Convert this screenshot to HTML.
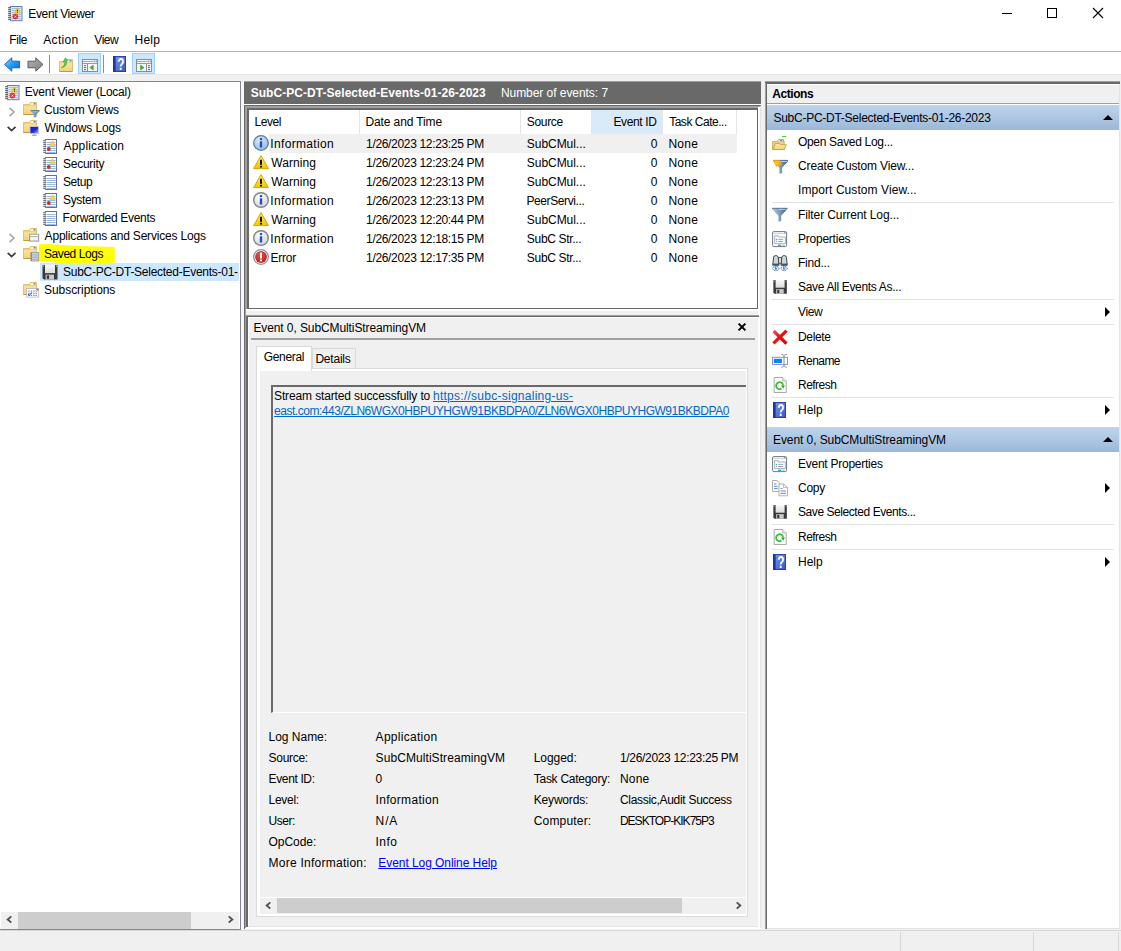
<!DOCTYPE html>
<html lang="en"><head><meta charset="utf-8"><title>Event Viewer</title>
<style>
html,body{margin:0;padding:0;}
body{width:1121px;height:951px;overflow:hidden;background:#f0f0f0;position:relative;font-family:"Liberation Sans",sans-serif;font-size:12px;color:#000;}
#w{position:absolute;left:0;top:0;width:1121px;height:951px;overflow:hidden;}
#w div,#w svg.ic,#w .t{position:absolute;}
.ic svg{display:block;}
.t{white-space:nowrap;line-height:14px;height:14px;}
</style></head><body><div id="w">
<div style="left:0px;top:0px;width:1121px;height:74px;background:#fff;"></div>
<div style="left:0px;top:51px;width:1121px;height:1px;background:#b5b5b5;"></div>
<div style="left:0px;top:74px;width:1121px;height:1px;background:#e6e6e6;"></div>
<div class="ic" style="left:7.7px;top:6px"><svg width="15" height="16" viewBox="0 0 15 16"><rect x="2.5" y="0.5" width="11.5" height="14.2" fill="#dde8f6" stroke="#6a7cba"/><rect x="0.4" y="1" width="2.4" height="13.4" fill="#bdbdbd"/><path d="M3.5 2.5H13.5" stroke="#a9c1e2" stroke-width="1"/><path d="M3.5 4.5H13.5" stroke="#a9c1e2" stroke-width="1"/><path d="M3.5 6.5H13.5" stroke="#a9c1e2" stroke-width="1"/><path d="M3.5 8.5H13.5" stroke="#a9c1e2" stroke-width="1"/><path d="M3.5 10.5H13.5" stroke="#a9c1e2" stroke-width="1"/><path d="M3.5 12.5H13.5" stroke="#a9c1e2" stroke-width="1"/><path d="M0.2 1.5h2.8" stroke="#5f5f5f" stroke-width="0.9"/><path d="M0.2 3.5h2.8" stroke="#5f5f5f" stroke-width="0.9"/><path d="M0.2 5.5h2.8" stroke="#5f5f5f" stroke-width="0.9"/><path d="M0.2 7.5h2.8" stroke="#5f5f5f" stroke-width="0.9"/><path d="M0.2 9.5h2.8" stroke="#5f5f5f" stroke-width="0.9"/><path d="M0.2 11.5h2.8" stroke="#5f5f5f" stroke-width="0.9"/><path d="M0.2 13.5h2.8" stroke="#5f5f5f" stroke-width="0.9"/><path d="M9.4 1.8L12.4 7.2H6.4Z" fill="#ffd51e" stroke="#d8ac00" stroke-width="0.5"/><rect x="8.9" y="3.6" width="1" height="1.9" fill="#333"/><rect x="8.9" y="5.9" width="1" height="0.8" fill="#333"/><circle cx="7.4" cy="10.6" r="2.6" fill="#d83a3a" stroke="#b82020" stroke-width="0.4"/><path d="M6.5 9.7l1.8 1.8M8.3 9.7l-1.8 1.8" stroke="#fff" stroke-width="0.8"/></svg></div>
<span class="t" style="left:28.32px;top:7px;letter-spacing:-0.367px;">Event Viewer</span>
<svg class="ic" style="left:996px;top:0" width="125" height="30" viewBox="0 0 125 30"><path d="M6 13.5h10" stroke="#000" stroke-width="1" fill="none"/><rect x="51.5" y="8.5" width="9" height="9" stroke="#000" fill="none"/><path d="M97 8l10 10M107 8l-10 10" stroke="#000" stroke-width="1.1" fill="none"/></svg>
<span class="t" style="left:9.22px;top:33px;letter-spacing:-0.379px;">File</span>
<span class="t" style="left:43.28px;top:33px;letter-spacing:0.326px;">Action</span>
<span class="t" style="left:94.35px;top:33px;letter-spacing:-0.475px;">View</span>
<span class="t" style="left:134.52px;top:33px;letter-spacing:0.202px;">Help</span>
<div class="ic" style="left:4px;top:57px"><svg width="17" height="15" viewBox="0 0 17 15"><defs><linearGradient id="g1" x1="0" y1="0" x2="1" y2="1"><stop offset="0" stop-color="#9adcff"/><stop offset="0.5" stop-color="#1e9bf0"/><stop offset="1" stop-color="#0868d0"/></linearGradient></defs><path d="M0.6 7.5L7.8 0.8V4.2H15.6V10.8H7.8V14.2Z" fill="url(#g1)" stroke="#1c66b4" stroke-width="1" stroke-linejoin="round"/></svg></div>
<div class="ic" style="left:27px;top:57px"><svg width="17" height="15" viewBox="0 0 17 15"><defs><linearGradient id="g2" x1="0" y1="0" x2="1" y2="1"><stop offset="0" stop-color="#b4b4b4"/><stop offset="1" stop-color="#7e7e7e"/></linearGradient></defs><path d="M16 7.5L8.8 0.8V4.2H1V10.8H8.8V14.2Z" fill="url(#g2)" stroke="#5c5c5c" stroke-width="1" stroke-linejoin="round"/></svg></div>
<div style="left:49px;top:55px;width:1px;height:18px;background:#8d8d8d;"></div>
<div class="ic" style="left:59px;top:57px"><svg width="15" height="15" viewBox="0 0 15 15"><defs><linearGradient id="g3" x1="0" y1="0" x2="0" y2="1"><stop offset="0" stop-color="#fdeaa8"/><stop offset="1" stop-color="#f1d27c"/></linearGradient></defs><path d="M0.5 4.5H6.5L7.5 2.5H13.5V14.5H0.5Z" fill="url(#g3)" stroke="#d9b45c" stroke-width="0.8"/><rect x="8.5" y="3" width="4" height="1.6" fill="#fff"/><rect x="10.5" y="3" width="2" height="1.6" fill="#4a8de8"/><path d="M0.5 14.5H13.5" stroke="#c09a3c" stroke-width="1"/><path d="M1 5.6H13" stroke="#e6c878" stroke-width="0.7"/><path d="M2.6 10.6C5.4 9.4 6 6.6 5.8 4.6L4 5L6.4 0.8L9.2 3.6L7.6 4C8 7.4 6.4 10.2 2.6 10.6Z" fill="#4ed04e" stroke="#2a9a2a" stroke-width="0.5"/></svg></div>
<div style="left:78px;top:53px;width:23px;height:21px;background:#cce8ff;border:1px solid #99d1ff;box-sizing:border-box;"></div>
<div class="ic" style="left:82px;top:59px"><svg width="16" height="13" viewBox="0 0 16 13"><rect x="0.5" y="0.5" width="15" height="12" fill="#f6f6f6" stroke="#8c8c8c"/><path d="M1 2.5H11" stroke="#a8a8a8"/><path d="M1 4.5H15" stroke="#9a9a9a"/><rect x="11.7" y="1.6" width="1.2" height="1.6" fill="#8c8c8c"/><rect x="13.6" y="1.6" width="1.2" height="1.6" fill="#8c8c8c"/><path d="M5.5 5V12" stroke="#8c8c8c"/><rect x="2" y="6" width="2" height="1.2" rx="0.5" fill="#3b7bd0"/><rect x="2" y="8" width="2" height="1.2" rx="0.5" fill="#3b7bd0"/><rect x="2" y="10" width="2" height="1.2" rx="0.5" fill="#3b7bd0"/><path d="M11.2 6.2V11L7.8 8.6Z" fill="#3fb53f" stroke="#2a9a2a" stroke-width="0.6"/></svg></div>
<div style="left:103px;top:55px;width:1px;height:18px;background:#8d8d8d;"></div>
<div class="ic" style="left:113px;top:56px"><svg width="13" height="16" viewBox="0 0 13 16"><defs><linearGradient id="g12" x1="0" y1="0" x2="1" y2="1"><stop offset="0" stop-color="#7a9aec"/><stop offset="1" stop-color="#3a55c0"/></linearGradient></defs><rect x="0" y="0" width="13" height="16" fill="url(#g12)"/><rect x="0" y="0" width="2.6" height="16" fill="#1b3796"/><rect x="0.4" y="0.4" width="12.2" height="15.2" fill="none" stroke="#1f3aa0" stroke-width="0.8"/><text transform="translate(7.8,13.8) scale(0.74,1)" font-family="Liberation Sans,sans-serif" font-weight="bold" font-size="16" fill="#fff" text-anchor="middle">?</text></svg></div>
<div style="left:132px;top:53px;width:23px;height:21px;background:#cce8ff;border:1px solid #99d1ff;box-sizing:border-box;"></div>
<div class="ic" style="left:136px;top:59px"><svg width="16" height="13" viewBox="0 0 16 13"><rect x="0.5" y="0.5" width="15" height="12" fill="#f6f6f6" stroke="#8c8c8c"/><path d="M1 2.5H11" stroke="#a8a8a8"/><path d="M1 4.5H15" stroke="#9a9a9a"/><rect x="11.7" y="1.6" width="1.2" height="1.6" fill="#8c8c8c"/><rect x="13.6" y="1.6" width="1.2" height="1.6" fill="#8c8c8c"/><path d="M10.5 5V12" stroke="#8c8c8c"/><rect x="12" y="6" width="2" height="1.2" rx="0.5" fill="#3b7bd0"/><rect x="12" y="8" width="2" height="1.2" rx="0.5" fill="#3b7bd0"/><rect x="12" y="10" width="2" height="1.2" rx="0.5" fill="#3b7bd0"/><path d="M4.6 6.2V11L8 8.6Z" fill="#3fb53f" stroke="#2a9a2a" stroke-width="0.6"/></svg></div>
<div style="left:0px;top:81px;width:241px;height:849px;background:#fff;border:1px solid #828790;border-left:none;box-sizing:border-box;"></div>
<div style="left:244px;top:81px;width:517px;height:1px;background:#a0a0a0;"></div>
<div style="left:765px;top:81px;width:355px;height:1px;background:#a0a0a0;"></div>
<div style="left:241px;top:82px;width:3px;height:848px;background:#f7f7f7;"></div>
<div class="ic" style="left:5px;top:85px"><svg width="15" height="16" viewBox="0 0 15 16"><rect x="2.5" y="0.5" width="11.5" height="14.2" fill="#dde8f6" stroke="#6a7cba"/><rect x="0.4" y="1" width="2.4" height="13.4" fill="#bdbdbd"/><path d="M3.5 2.5H13.5" stroke="#a9c1e2" stroke-width="1"/><path d="M3.5 4.5H13.5" stroke="#a9c1e2" stroke-width="1"/><path d="M3.5 6.5H13.5" stroke="#a9c1e2" stroke-width="1"/><path d="M3.5 8.5H13.5" stroke="#a9c1e2" stroke-width="1"/><path d="M3.5 10.5H13.5" stroke="#a9c1e2" stroke-width="1"/><path d="M3.5 12.5H13.5" stroke="#a9c1e2" stroke-width="1"/><path d="M0.2 1.5h2.8" stroke="#5f5f5f" stroke-width="0.9"/><path d="M0.2 3.5h2.8" stroke="#5f5f5f" stroke-width="0.9"/><path d="M0.2 5.5h2.8" stroke="#5f5f5f" stroke-width="0.9"/><path d="M0.2 7.5h2.8" stroke="#5f5f5f" stroke-width="0.9"/><path d="M0.2 9.5h2.8" stroke="#5f5f5f" stroke-width="0.9"/><path d="M0.2 11.5h2.8" stroke="#5f5f5f" stroke-width="0.9"/><path d="M0.2 13.5h2.8" stroke="#5f5f5f" stroke-width="0.9"/><path d="M9.4 1.8L12.4 7.2H6.4Z" fill="#ffd51e" stroke="#d8ac00" stroke-width="0.5"/><rect x="8.9" y="3.6" width="1" height="1.9" fill="#333"/><rect x="8.9" y="5.9" width="1" height="0.8" fill="#333"/><circle cx="7.4" cy="10.6" r="2.6" fill="#d83a3a" stroke="#b82020" stroke-width="0.4"/><path d="M6.5 9.7l1.8 1.8M8.3 9.7l-1.8 1.8" stroke="#fff" stroke-width="0.8"/></svg></div>
<span class="t" style="left:24.72px;top:85px;letter-spacing:-0.222px;">Event Viewer (Local)</span>
<svg class="ic" style="left:8px;top:107px" width="8" height="10" viewBox="0 0 8 10"><path d="M1.5 0.8L6 5L1.5 9.2" stroke="#a6a6a6" stroke-width="1.6" fill="none"/></svg>
<div class="ic" style="left:23px;top:102px"><svg width="17" height="17" viewBox="0 0 17 17"><defs><linearGradient id="g5" x1="0" y1="0" x2="0" y2="1"><stop offset="0" stop-color="#fdeaa8"/><stop offset="1" stop-color="#f1d27c"/></linearGradient><linearGradient id="g6" x1="0" y1="0" x2="1" y2="0"><stop offset="0" stop-color="#b6cfe2"/><stop offset="0.5" stop-color="#7d9db8"/><stop offset="1" stop-color="#3c5a76"/></linearGradient></defs><path d="M0.5 2.5H6.5L7.5 0.5H13.5V12.5H0.5Z" fill="url(#g5)" stroke="#d9b45c" stroke-width="0.8"/><rect x="8.5" y="1" width="4" height="1.6" fill="#fff"/><rect x="10.5" y="1" width="2" height="1.6" fill="#4a8de8"/><path d="M0.5 12.5H13.5" stroke="#c09a3c" stroke-width="1"/><path d="M1 3.6H13" stroke="#e6c878" stroke-width="0.7"/><path d="M7.5 8.3H16.3V9.5L13.4 12.332V14.9L10.700000000000001 15.5V12.332L7.5 9.5Z" fill="url(#g6)"/><path d="M7.5 8.700000000000001H16.3" stroke="#56748f" stroke-width="0.9"/><path d="M11.46 9.8H15.5" stroke="#e8f0f6" stroke-width="0.7"/></svg></div>
<span class="t" style="left:43.99px;top:103px;letter-spacing:-0.134px;">Custom Views</span>
<svg class="ic" style="left:7px;top:126px" width="10" height="7" viewBox="0 0 10 7"><path d="M0.7 0.8L4.6 4.6L8.5 0.8" stroke="#3a3a3a" stroke-width="1.7" fill="none"/></svg>
<div class="ic" style="left:23px;top:120px"><svg width="17" height="17" viewBox="0 0 17 17"><defs><linearGradient id="g7" x1="0" y1="0" x2="0" y2="1"><stop offset="0" stop-color="#fdeaa8"/><stop offset="1" stop-color="#f1d27c"/></linearGradient><linearGradient id="g8" x1="0" y1="0" x2="1" y2="1"><stop offset="0" stop-color="#0a16c8"/><stop offset="0.55" stop-color="#1a2fd8"/><stop offset="1" stop-color="#b8c8ff"/></linearGradient></defs><path d="M0.5 2.5H6.5L7.5 0.5H13.5V12.5H0.5Z" fill="url(#g7)" stroke="#d9b45c" stroke-width="0.8"/><rect x="8.5" y="1" width="4" height="1.6" fill="#fff"/><rect x="10.5" y="1" width="2" height="1.6" fill="#4a8de8"/><path d="M0.5 12.5H13.5" stroke="#c09a3c" stroke-width="1"/><path d="M1 3.6H13" stroke="#e6c878" stroke-width="0.7"/><rect x="7" y="6.5" width="8.6" height="7" fill="url(#g8)" stroke="#c8c8c8" stroke-width="0.9"/><path d="M9 15.3h4.6" stroke="#8a8a8a" stroke-width="0.9"/><path d="M10.3 14.2h2" stroke="#aaa" stroke-width="1"/></svg></div>
<span class="t" style="left:44.55px;top:121px;letter-spacing:-0.147px;">Windows Logs</span>
<div class="ic" style="left:43px;top:139px"><svg width="14" height="15" viewBox="0 0 14 15"><rect x="2.5" y="0.5" width="11" height="14" fill="#fff" stroke="#5f6fae"/><rect x="0.4" y="0.8" width="2.4" height="13.4" fill="#cfcfcf"/><path d="M3.5 3.5H12.5" stroke="#9ab8dc" stroke-width="1"/><path d="M3.5 5.5H12.5" stroke="#9ab8dc" stroke-width="1"/><path d="M3.5 7.5H12.5" stroke="#9ab8dc" stroke-width="1"/><path d="M3.5 9.5H12.5" stroke="#9ab8dc" stroke-width="1"/><path d="M3.5 11.5H12.5" stroke="#9ab8dc" stroke-width="1"/><path d="M3.5 13.5H12.5" stroke="#9ab8dc" stroke-width="1"/><path d="M0.3 1.5h2.6" stroke="#6a6a6a" stroke-width="0.9"/><path d="M0.3 3.5h2.6" stroke="#6a6a6a" stroke-width="0.9"/><path d="M0.3 5.5h2.6" stroke="#6a6a6a" stroke-width="0.9"/><path d="M0.3 7.5h2.6" stroke="#6a6a6a" stroke-width="0.9"/><path d="M0.3 9.5h2.6" stroke="#6a6a6a" stroke-width="0.9"/><path d="M0.3 11.5h2.6" stroke="#6a6a6a" stroke-width="0.9"/><path d="M0.3 13.5h2.6" stroke="#6a6a6a" stroke-width="0.9"/><path d="M9.5 1.8L12.3 6.4H6.7Z" fill="#ffd83a" stroke="#e0b000" stroke-width="0.5"/><circle cx="5.8" cy="10" r="1.9" fill="#d42a2a"/></svg></div>
<span class="t" style="left:63.58px;top:139px;letter-spacing:0.161px;">Application</span>
<div class="ic" style="left:43px;top:157px"><svg width="14" height="15" viewBox="0 0 14 15"><rect x="2.5" y="0.5" width="11" height="14" fill="#fff" stroke="#5f6fae"/><rect x="0.4" y="0.8" width="2.4" height="13.4" fill="#cfcfcf"/><path d="M3.5 3.5H12.5" stroke="#9ab8dc" stroke-width="1"/><path d="M3.5 5.5H12.5" stroke="#9ab8dc" stroke-width="1"/><path d="M3.5 7.5H12.5" stroke="#9ab8dc" stroke-width="1"/><path d="M3.5 9.5H12.5" stroke="#9ab8dc" stroke-width="1"/><path d="M3.5 11.5H12.5" stroke="#9ab8dc" stroke-width="1"/><path d="M3.5 13.5H12.5" stroke="#9ab8dc" stroke-width="1"/><path d="M0.3 1.5h2.6" stroke="#6a6a6a" stroke-width="0.9"/><path d="M0.3 3.5h2.6" stroke="#6a6a6a" stroke-width="0.9"/><path d="M0.3 5.5h2.6" stroke="#6a6a6a" stroke-width="0.9"/><path d="M0.3 7.5h2.6" stroke="#6a6a6a" stroke-width="0.9"/><path d="M0.3 9.5h2.6" stroke="#6a6a6a" stroke-width="0.9"/><path d="M0.3 11.5h2.6" stroke="#6a6a6a" stroke-width="0.9"/><path d="M0.3 13.5h2.6" stroke="#6a6a6a" stroke-width="0.9"/><path d="M9.5 1.8L12.3 6.4H6.7Z" fill="#ffd83a" stroke="#e0b000" stroke-width="0.5"/><circle cx="5.8" cy="10" r="1.9" fill="#d42a2a"/></svg></div>
<span class="t" style="left:63.06px;top:157px;letter-spacing:-0.262px;">Security</span>
<div class="ic" style="left:43px;top:175px"><svg width="14" height="15" viewBox="0 0 14 15"><rect x="2.5" y="0.5" width="11" height="14" fill="#fff" stroke="#5f6fae"/><rect x="0.4" y="0.8" width="2.4" height="13.4" fill="#cfcfcf"/><path d="M3.5 3.5H12.5" stroke="#9ab8dc" stroke-width="1"/><path d="M3.5 5.5H12.5" stroke="#9ab8dc" stroke-width="1"/><path d="M3.5 7.5H12.5" stroke="#9ab8dc" stroke-width="1"/><path d="M3.5 9.5H12.5" stroke="#9ab8dc" stroke-width="1"/><path d="M3.5 11.5H12.5" stroke="#9ab8dc" stroke-width="1"/><path d="M3.5 13.5H12.5" stroke="#9ab8dc" stroke-width="1"/><path d="M0.3 1.5h2.6" stroke="#6a6a6a" stroke-width="0.9"/><path d="M0.3 3.5h2.6" stroke="#6a6a6a" stroke-width="0.9"/><path d="M0.3 5.5h2.6" stroke="#6a6a6a" stroke-width="0.9"/><path d="M0.3 7.5h2.6" stroke="#6a6a6a" stroke-width="0.9"/><path d="M0.3 9.5h2.6" stroke="#6a6a6a" stroke-width="0.9"/><path d="M0.3 11.5h2.6" stroke="#6a6a6a" stroke-width="0.9"/><path d="M0.3 13.5h2.6" stroke="#6a6a6a" stroke-width="0.9"/></svg></div>
<span class="t" style="left:63.06px;top:175px;letter-spacing:-0.450px;">Setup</span>
<div class="ic" style="left:43px;top:193px"><svg width="14" height="15" viewBox="0 0 14 15"><rect x="2.5" y="0.5" width="11" height="14" fill="#fff" stroke="#5f6fae"/><rect x="0.4" y="0.8" width="2.4" height="13.4" fill="#cfcfcf"/><path d="M3.5 3.5H12.5" stroke="#9ab8dc" stroke-width="1"/><path d="M3.5 5.5H12.5" stroke="#9ab8dc" stroke-width="1"/><path d="M3.5 7.5H12.5" stroke="#9ab8dc" stroke-width="1"/><path d="M3.5 9.5H12.5" stroke="#9ab8dc" stroke-width="1"/><path d="M3.5 11.5H12.5" stroke="#9ab8dc" stroke-width="1"/><path d="M3.5 13.5H12.5" stroke="#9ab8dc" stroke-width="1"/><path d="M0.3 1.5h2.6" stroke="#6a6a6a" stroke-width="0.9"/><path d="M0.3 3.5h2.6" stroke="#6a6a6a" stroke-width="0.9"/><path d="M0.3 5.5h2.6" stroke="#6a6a6a" stroke-width="0.9"/><path d="M0.3 7.5h2.6" stroke="#6a6a6a" stroke-width="0.9"/><path d="M0.3 9.5h2.6" stroke="#6a6a6a" stroke-width="0.9"/><path d="M0.3 11.5h2.6" stroke="#6a6a6a" stroke-width="0.9"/><path d="M0.3 13.5h2.6" stroke="#6a6a6a" stroke-width="0.9"/><path d="M9.5 1.8L12.3 6.4H6.7Z" fill="#ffd83a" stroke="#e0b000" stroke-width="0.5"/><circle cx="5.8" cy="10" r="1.9" fill="#d42a2a"/></svg></div>
<span class="t" style="left:63.06px;top:193px;letter-spacing:-0.366px;">System</span>
<div class="ic" style="left:43px;top:211px"><svg width="14" height="15" viewBox="0 0 14 15"><rect x="2.5" y="0.5" width="11" height="14" fill="#fff" stroke="#5f6fae"/><rect x="0.4" y="0.8" width="2.4" height="13.4" fill="#cfcfcf"/><path d="M3.5 3.5H12.5" stroke="#9ab8dc" stroke-width="1"/><path d="M3.5 5.5H12.5" stroke="#9ab8dc" stroke-width="1"/><path d="M3.5 7.5H12.5" stroke="#9ab8dc" stroke-width="1"/><path d="M3.5 9.5H12.5" stroke="#9ab8dc" stroke-width="1"/><path d="M3.5 11.5H12.5" stroke="#9ab8dc" stroke-width="1"/><path d="M3.5 13.5H12.5" stroke="#9ab8dc" stroke-width="1"/><path d="M0.3 1.5h2.6" stroke="#6a6a6a" stroke-width="0.9"/><path d="M0.3 3.5h2.6" stroke="#6a6a6a" stroke-width="0.9"/><path d="M0.3 5.5h2.6" stroke="#6a6a6a" stroke-width="0.9"/><path d="M0.3 7.5h2.6" stroke="#6a6a6a" stroke-width="0.9"/><path d="M0.3 9.5h2.6" stroke="#6a6a6a" stroke-width="0.9"/><path d="M0.3 11.5h2.6" stroke="#6a6a6a" stroke-width="0.9"/><path d="M0.3 13.5h2.6" stroke="#6a6a6a" stroke-width="0.9"/></svg></div>
<span class="t" style="left:62.62px;top:211px;letter-spacing:-0.301px;">Forwarded Events</span>
<svg class="ic" style="left:8px;top:233px" width="8" height="10" viewBox="0 0 8 10"><path d="M1.5 0.8L6 5L1.5 9.2" stroke="#a6a6a6" stroke-width="1.6" fill="none"/></svg>
<div class="ic" style="left:23px;top:228px"><svg width="17" height="17" viewBox="0 0 17 17"><defs><linearGradient id="g9" x1="0" y1="0" x2="0" y2="1"><stop offset="0" stop-color="#fdeaa8"/><stop offset="1" stop-color="#f1d27c"/></linearGradient></defs><path d="M0.5 2.5H6.5L7.5 0.5H13.5V12.5H0.5Z" fill="url(#g9)" stroke="#d9b45c" stroke-width="0.8"/><rect x="8.5" y="1" width="4" height="1.6" fill="#fff"/><rect x="10.5" y="1" width="2" height="1.6" fill="#4a8de8"/><path d="M0.5 12.5H13.5" stroke="#c09a3c" stroke-width="1"/><path d="M1 3.6H13" stroke="#e6c878" stroke-width="0.7"/><rect x="6.7" y="6.3" width="9" height="6.8" fill="#f4f4f4" stroke="#8a8a8a" stroke-width="0.9"/><rect x="7.2" y="6.8" width="8" height="1.5" fill="#fff"/><path d="M7 8.6h8.6" stroke="#9a9a9a" stroke-width="0.7"/></svg></div>
<span class="t" style="left:44.58px;top:229px;letter-spacing:-0.186px;">Applications and Services Logs</span>
<div style="left:40px;top:263px;width:199px;height:18px;background:#cce8ff;"></div>
<svg class="ic" style="left:30px;top:240px" width="100" height="30" viewBox="30 240 100 30"><path d="M38.9 244.1L50 244.2L80 246L114.7 246.9L114.8 262.6L108 264.3L66 264.3L52 261.9L39.3 260.9Z" fill="#ffff00"/></svg>
<svg class="ic" style="left:7px;top:252px" width="10" height="7" viewBox="0 0 10 7"><path d="M0.7 0.8L4.6 4.6L8.5 0.8" stroke="#3a3a3a" stroke-width="1.7" fill="none"/></svg>
<div class="ic" style="left:23px;top:246px"><svg width="17" height="17" viewBox="0 0 17 17"><defs><linearGradient id="g10" x1="0" y1="0" x2="0" y2="1"><stop offset="0" stop-color="#fdeaa8"/><stop offset="1" stop-color="#f1d27c"/></linearGradient></defs><path d="M0.5 2.5H6.5L7.5 0.5H13.5V12.5H0.5Z" fill="url(#g10)" stroke="#d9b45c" stroke-width="0.8"/><rect x="8.5" y="1" width="4" height="1.6" fill="#fff"/><rect x="10.5" y="1" width="2" height="1.6" fill="#4a8de8"/><path d="M0.5 12.5H13.5" stroke="#c09a3c" stroke-width="1"/><path d="M1 3.6H13" stroke="#e6c878" stroke-width="0.7"/><rect x="8.3" y="6.4" width="7.4" height="8.6" fill="#e4e4dc" stroke="#8a8ea8" stroke-width="0.8"/><path d="M9 8.3H15" stroke="#7fa0c0" stroke-width="0.8"/><path d="M9 10H15" stroke="#7fa0c0" stroke-width="0.8"/><path d="M9 11.7H15" stroke="#7fa0c0" stroke-width="0.8"/><path d="M9 13.4H15" stroke="#7fa0c0" stroke-width="0.8"/><path d="M7.3 7.6h1.6" stroke="#666" stroke-width="0.7"/><path d="M7.3 9.3h1.6" stroke="#666" stroke-width="0.7"/><path d="M7.3 11h1.6" stroke="#666" stroke-width="0.7"/><path d="M7.3 12.7h1.6" stroke="#666" stroke-width="0.7"/><path d="M7.3 14.2h1.6" stroke="#666" stroke-width="0.7"/></svg></div>
<span class="t" style="left:44.06px;top:247px;letter-spacing:-0.449px;">Saved Logs</span>
<div class="ic" style="left:42px;top:264px"><svg width="16" height="16" viewBox="0 0 16 16"><defs><linearGradient id="g13" x1="0" y1="0" x2="0" y2="1"><stop offset="0" stop-color="#fafafa"/><stop offset="1" stop-color="#dcdcdc"/></linearGradient></defs><path d="M0.5 1H15.5V15.5H1.8L0.5 14.2Z" fill="#3a3a3a"/><rect x="3" y="0.7" width="10" height="8.4" fill="url(#g13)"/><rect x="3.6" y="10.6" width="8.4" height="4.9" fill="#c9c9c9"/><rect x="4.8" y="11.3" width="2.3" height="3.6" fill="#3a3a3a"/><rect x="0.9" y="1.6" width="1" height="1" fill="#eee"/><rect x="14" y="1.6" width="1" height="1" fill="#eee"/></svg></div>
<span class="t" style="left:63.06px;top:265px;letter-spacing:-0.267px;">SubC-PC-DT-Selected-Events-01-</span>
<div class="ic" style="left:23px;top:282px"><svg width="17" height="17" viewBox="0 0 17 17"><defs><linearGradient id="g11" x1="0" y1="0" x2="0" y2="1"><stop offset="0" stop-color="#fdeaa8"/><stop offset="1" stop-color="#f1d27c"/></linearGradient></defs><path d="M0.5 2.5H6.5L7.5 0.5H13.5V12.5H0.5Z" fill="url(#g11)" stroke="#d9b45c" stroke-width="0.8"/><rect x="8.5" y="1" width="4" height="1.6" fill="#fff"/><rect x="10.5" y="1" width="2" height="1.6" fill="#4a8de8"/><path d="M0.5 12.5H13.5" stroke="#c09a3c" stroke-width="1"/><path d="M1 3.6H13" stroke="#e6c878" stroke-width="0.7"/><rect x="3.7" y="6.5" width="12" height="8.6" fill="#fff" stroke="#b4b4b4" stroke-width="0.8"/><path d="M12.5 6.8H15.3V9.2Z" fill="#f05050"/><rect x="5.3" y="8.6" width="1.3" height="1" fill="#3b6fd0"/><rect x="5.3" y="10.8" width="1.3" height="1" fill="#3b6fd0"/><rect x="5.3" y="12.9" width="1.3" height="1" fill="#3b6fd0"/><rect x="7.8" y="8.6" width="1.3" height="1" fill="#3b6fd0"/><rect x="7.8" y="10.8" width="1.3" height="1" fill="#3b6fd0"/><rect x="7.8" y="12.9" width="1.3" height="1" fill="#3b6fd0"/><rect x="10.3" y="8.6" width="1.3" height="1" fill="#3b6fd0"/><rect x="10.3" y="10.8" width="1.3" height="1" fill="#3b6fd0"/><rect x="10.3" y="12.9" width="1.3" height="1" fill="#3b6fd0"/><rect x="12.6" y="8.6" width="1.3" height="1" fill="#3b6fd0"/><rect x="12.6" y="10.8" width="1.3" height="1" fill="#3b6fd0"/><rect x="12.6" y="12.9" width="1.3" height="1" fill="#3b6fd0"/><path d="M5 12l1.3 1.6L8.6 10.6" stroke="#1f50c0" stroke-width="1" fill="none"/></svg></div>
<span class="t" style="left:44.06px;top:283px;letter-spacing:-0.059px;">Subscriptions</span>
<div style="left:1px;top:912px;width:238px;height:17px;background:#f0f0f0;"></div>
<div style="left:18px;top:912px;width:173px;height:17px;background:#cdcdcd;"></div>
<svg class="ic" style="left:6px;top:915px" width="7" height="9" viewBox="0 0 7 9"><path d="M5.3 1.4L1.7 4.5L5.3 7.6" stroke="#505050" stroke-width="1.9" fill="none"/></svg>
<svg class="ic" style="left:227px;top:915px" width="7" height="9" viewBox="0 0 7 9"><path d="M1.7 1.4L5.3 4.5L1.7 7.6" stroke="#505050" stroke-width="1.9" fill="none"/></svg>
<div style="left:244px;top:82px;width:517px;height:22px;background:#696969;"></div>
<span class="t" style="left:250.65px;top:86px;letter-spacing:0.047px;color:#fff;font-weight:bold;">SubC-PC-DT-Selected-Events-01-26-2023</span>
<span class="t" style="left:500.92px;top:86px;letter-spacing:-0.050px;color:#fff;">Number of events: 7</span>
<div style="left:244px;top:104px;width:517px;height:1px;background:#fff;"></div>
<div style="left:244px;top:105px;width:517px;height:824px;background:#f0f0f0;"></div>
<div style="left:244px;top:105px;width:1px;height:824px;background:#696969;"></div>
<div style="left:244px;top:105px;width:517px;height:1px;background:#696969;"></div>
<div style="left:245px;top:106px;width:1px;height:822px;background:#a0a0a0;"></div>
<div style="left:245px;top:106px;width:515px;height:1px;background:#a0a0a0;"></div>
<div style="left:760px;top:106px;width:1px;height:823px;background:#e3e3e3;"></div>
<div style="left:245px;top:928px;width:516px;height:1px;background:#fff;"></div>
<div style="left:246px;top:927px;width:514px;height:1px;background:#fff;"></div>
<div style="left:246px;top:926px;width:513px;height:1px;background:#e3e3e3;"></div>
<div style="left:759px;top:107px;width:1px;height:821px;background:#fff;"></div>
<div style="left:758px;top:107px;width:1px;height:820px;background:#fff;"></div>
<div style="left:246px;top:107px;width:512px;height:202px;background:#696969;"></div>
<div style="left:246px;top:107px;width:512px;height:1px;background:#a0a0a0;"></div>
<div style="left:246px;top:107px;width:1px;height:202px;background:#a0a0a0;"></div>
<div style="left:249px;top:110px;width:508px;height:198px;background:#fff;"></div>
<div style="left:758px;top:107px;width:2px;height:204px;background:#fff;"></div>
<div style="left:246px;top:309px;width:514px;height:2px;background:#fff;"></div>
<div style="left:591px;top:110px;width:72px;height:24px;background:#d9ebf9;"></div>
<div style="left:359px;top:110px;width:1px;height:24px;background:#e5e5e5;"></div>
<div style="left:520px;top:110px;width:1px;height:24px;background:#e5e5e5;"></div>
<div style="left:591px;top:110px;width:1px;height:24px;background:#e5e5e5;"></div>
<div style="left:662px;top:110px;width:1px;height:24px;background:#e5e5e5;"></div>
<div style="left:736px;top:110px;width:1px;height:24px;background:#e5e5e5;"></div>
<span class="t" style="left:254.62px;top:115px;letter-spacing:-0.450px;">Level</span>
<span class="t" style="left:365.52px;top:115px;letter-spacing:-0.121px;">Date and Time</span>
<span class="t" style="left:526.86px;top:115px;letter-spacing:-0.346px;">Source</span>
<span class="t" style="left:613.42px;top:115px;letter-spacing:-0.363px;">Event ID</span>
<span class="t" style="left:669.13px;top:115px;letter-spacing:-0.470px;">Task Cate...</span>
<div style="left:269px;top:134px;width:468px;height:19px;background:#f0f0f0;"></div>
<div class="ic" style="left:253px;top:135px"><svg width="17" height="17" viewBox="0 0 17 17"><defs><radialGradient id="g14" cx="0.4" cy="0.3" r="0.8"><stop offset="0" stop-color="#dcebf9"/><stop offset="1" stop-color="#8fb6dc"/></radialGradient></defs><circle cx="8" cy="8" r="7.3" fill="url(#g14)" stroke="#547ea6" stroke-width="1.3"/><rect x="6.8" y="6.3" width="2.4" height="6.2" fill="#1f4fc6"/><rect x="6.8" y="3" width="2.4" height="2.2" rx="0.8" fill="#1f4fc6"/></svg></div>
<span class="t" style="left:270.29px;top:137px;letter-spacing:0.342px;">Information</span>
<span class="t" style="left:366.09px;top:137px;letter-spacing:-0.332px;">1/26/2023 12:23:25 PM</span>
<span class="t" style="left:526.86px;top:137px;letter-spacing:-0.050px;">SubCMul...</span>
<span class="t" style="left:650.83px;top:137px;">0</span>
<span class="t" style="left:668.42px;top:137px;letter-spacing:0.300px;">None</span>
<div class="ic" style="left:253px;top:154px"><svg width="17" height="17" viewBox="0 0 17 17"><defs><linearGradient id="g16" x1="0" y1="0" x2="0" y2="1"><stop offset="0" stop-color="#fff06a"/><stop offset="1" stop-color="#f2c200"/></linearGradient></defs><path d="M8 1.6L15.4 14.6H0.6Z" fill="url(#g16)" stroke="#d2a800" stroke-width="1" stroke-linejoin="round"/><rect x="7" y="5.8" width="2" height="5" fill="#111"/><rect x="7" y="11.8" width="2" height="1.7" fill="#111"/></svg></div>
<span class="t" style="left:271.35px;top:156px;letter-spacing:0.064px;">Warning</span>
<span class="t" style="left:366.09px;top:156px;letter-spacing:-0.332px;">1/26/2023 12:23:24 PM</span>
<span class="t" style="left:526.86px;top:156px;letter-spacing:-0.050px;">SubCMul...</span>
<span class="t" style="left:650.83px;top:156px;">0</span>
<span class="t" style="left:668.42px;top:156px;letter-spacing:0.300px;">None</span>
<div class="ic" style="left:253px;top:173px"><svg width="17" height="17" viewBox="0 0 17 17"><defs><linearGradient id="g16" x1="0" y1="0" x2="0" y2="1"><stop offset="0" stop-color="#fff06a"/><stop offset="1" stop-color="#f2c200"/></linearGradient></defs><path d="M8 1.6L15.4 14.6H0.6Z" fill="url(#g16)" stroke="#d2a800" stroke-width="1" stroke-linejoin="round"/><rect x="7" y="5.8" width="2" height="5" fill="#111"/><rect x="7" y="11.8" width="2" height="1.7" fill="#111"/></svg></div>
<span class="t" style="left:271.35px;top:175px;letter-spacing:0.064px;">Warning</span>
<span class="t" style="left:366.09px;top:175px;letter-spacing:-0.332px;">1/26/2023 12:23:13 PM</span>
<span class="t" style="left:526.86px;top:175px;letter-spacing:-0.050px;">SubCMul...</span>
<span class="t" style="left:650.83px;top:175px;">0</span>
<span class="t" style="left:668.42px;top:175px;letter-spacing:0.300px;">None</span>
<div class="ic" style="left:253px;top:192px"><svg width="17" height="17" viewBox="0 0 17 17"><defs><radialGradient id="g15" cx="0.4" cy="0.3" r="0.8"><stop offset="0" stop-color="#ffffff"/><stop offset="1" stop-color="#d0d0d0"/></radialGradient></defs><circle cx="8" cy="8" r="7.3" fill="url(#g15)" stroke="#858585" stroke-width="1.4"/><rect x="6.8" y="6.3" width="2.4" height="6.2" fill="#1f4fc6"/><rect x="6.8" y="3" width="2.4" height="2.2" rx="0.8" fill="#1f4fc6"/></svg></div>
<span class="t" style="left:270.29px;top:194px;letter-spacing:0.342px;">Information</span>
<span class="t" style="left:366.09px;top:194px;letter-spacing:-0.332px;">1/26/2023 12:23:13 PM</span>
<span class="t" style="left:526.42px;top:194px;letter-spacing:-0.392px;">PeerServi...</span>
<span class="t" style="left:650.83px;top:194px;">0</span>
<span class="t" style="left:668.42px;top:194px;letter-spacing:0.300px;">None</span>
<div class="ic" style="left:253px;top:211px"><svg width="17" height="17" viewBox="0 0 17 17"><defs><linearGradient id="g16" x1="0" y1="0" x2="0" y2="1"><stop offset="0" stop-color="#fff06a"/><stop offset="1" stop-color="#f2c200"/></linearGradient></defs><path d="M8 1.6L15.4 14.6H0.6Z" fill="url(#g16)" stroke="#d2a800" stroke-width="1" stroke-linejoin="round"/><rect x="7" y="5.8" width="2" height="5" fill="#111"/><rect x="7" y="11.8" width="2" height="1.7" fill="#111"/></svg></div>
<span class="t" style="left:271.35px;top:213px;letter-spacing:0.064px;">Warning</span>
<span class="t" style="left:366.09px;top:213px;letter-spacing:-0.332px;">1/26/2023 12:20:44 PM</span>
<span class="t" style="left:526.86px;top:213px;letter-spacing:-0.050px;">SubCMul...</span>
<span class="t" style="left:650.83px;top:213px;">0</span>
<span class="t" style="left:668.42px;top:213px;letter-spacing:0.300px;">None</span>
<div class="ic" style="left:253px;top:230px"><svg width="17" height="17" viewBox="0 0 17 17"><defs><radialGradient id="g15" cx="0.4" cy="0.3" r="0.8"><stop offset="0" stop-color="#ffffff"/><stop offset="1" stop-color="#d0d0d0"/></radialGradient></defs><circle cx="8" cy="8" r="7.3" fill="url(#g15)" stroke="#858585" stroke-width="1.4"/><rect x="6.8" y="6.3" width="2.4" height="6.2" fill="#1f4fc6"/><rect x="6.8" y="3" width="2.4" height="2.2" rx="0.8" fill="#1f4fc6"/></svg></div>
<span class="t" style="left:270.29px;top:232px;letter-spacing:0.342px;">Information</span>
<span class="t" style="left:366.09px;top:232px;letter-spacing:-0.332px;">1/26/2023 12:18:15 PM</span>
<span class="t" style="left:526.86px;top:232px;letter-spacing:-0.329px;">SubC Str...</span>
<span class="t" style="left:650.83px;top:232px;">0</span>
<span class="t" style="left:668.42px;top:232px;letter-spacing:0.300px;">None</span>
<div class="ic" style="left:253px;top:249px"><svg width="17" height="17" viewBox="0 0 17 17"><defs><radialGradient id="g17" cx="0.4" cy="0.3" r="0.8"><stop offset="0" stop-color="#e05050"/><stop offset="1" stop-color="#c01818"/></radialGradient></defs><circle cx="8" cy="8" r="7.3" fill="#fff" stroke="#8e8e8e" stroke-width="1.3"/><circle cx="8" cy="8" r="5.9" fill="url(#g17)"/><rect x="7" y="3.6" width="2" height="6" fill="#fff"/><rect x="7" y="10.6" width="2" height="1.8" fill="#fff"/></svg></div>
<span class="t" style="left:270.42px;top:251px;letter-spacing:-0.180px;">Error</span>
<span class="t" style="left:366.09px;top:251px;letter-spacing:-0.332px;">1/26/2023 12:17:35 PM</span>
<span class="t" style="left:526.86px;top:251px;letter-spacing:-0.329px;">SubC Str...</span>
<span class="t" style="left:650.83px;top:251px;">0</span>
<span class="t" style="left:668.42px;top:251px;letter-spacing:0.300px;">None</span>
<div style="left:246px;top:315px;width:513px;height:1px;background:#a0a0a0;"></div>
<div style="left:246px;top:316px;width:513px;height:1px;background:#696969;"></div>
<div style="left:246px;top:316px;width:2px;height:611px;background:#696969;"></div>
<div style="left:248px;top:317px;width:511px;height:1px;background:#fff;"></div>
<div style="left:248px;top:317px;width:1px;height:609px;background:#fff;"></div>
<span class="t" style="left:253.42px;top:321px;letter-spacing:-0.097px;">Event 0, SubCMultiStreamingVM</span>
<svg class="ic" style="left:737px;top:322px" width="10" height="10" viewBox="0 0 10 10"><path d="M1.6 1.6L8.4 8.4M8.4 1.6L1.6 8.4" stroke="#000" stroke-width="2" fill="none"/></svg>
<div style="left:251px;top:338px;width:504px;height:2px;background:#a0a0a0;"></div>
<div style="left:256px;top:368px;width:492px;height:549px;background:#fff;border:1px solid #dcdcdc;box-sizing:border-box;"></div>
<div style="left:260px;top:371px;width:486px;height:543px;background:#f0f0f0;"></div>
<div style="left:312px;top:348px;width:44px;height:20px;background:#f0f0f0;border:1px solid #d9d9d9;border-bottom:none;box-sizing:border-box;"></div>
<div style="left:256px;top:346px;width:56px;height:25px;background:#fff;border:1px solid #d9d9d9;border-bottom:none;box-sizing:border-box;"></div>
<span class="t" style="left:263.80px;top:350px;letter-spacing:-0.350px;">General</span>
<span class="t" style="left:315.42px;top:352px;letter-spacing:-0.210px;">Details</span>
<div style="left:271px;top:385px;width:475px;height:328px;background:#f0f0f0;border-left:2px solid #696969;border-top:2px solid #696969;border-bottom:1px solid #fff;box-sizing:border-box;"></div>
<span class="t" style="left:274.06px;top:389px;letter-spacing:-0.133px;">Stream started successfully to</span>
<span class="t" style="left:432.97px;top:389px;letter-spacing:0.261px;color:#0066cc;text-decoration:underline;">https://subc-signaling-us-</span>
<span class="t" style="left:274.09px;top:404px;letter-spacing:-0.472px;color:#0066cc;text-decoration:underline;">east.com:443/ZLN6WGX0HBPUYHGW91BKBDPA0/ZLN6WGX0HBPUYHGW91BKBDPA0</span>
<span class="t" style="left:268.55px;top:730px;letter-spacing:-0.017px;">Log Name:</span>
<span class="t" style="left:375.60px;top:730px;letter-spacing:0.280px;">Application</span>
<span class="t" style="left:268.55px;top:751px;letter-spacing:-0.289px;">Source:</span>
<span class="t" style="left:375.60px;top:751px;letter-spacing:0.075px;">SubCMultiStreamingVM</span>
<span class="t" style="left:533.75px;top:751px;letter-spacing:-0.059px;">Logged:</span>
<span class="t" style="left:619.90px;top:751px;letter-spacing:-0.310px;">1/26/2023 12:23:25 PM</span>
<span class="t" style="left:268.55px;top:772px;letter-spacing:-0.363px;">Event ID:</span>
<span class="t" style="left:375.60px;top:772px;">0</span>
<span class="t" style="left:533.75px;top:772px;letter-spacing:-0.274px;">Task Category:</span>
<span class="t" style="left:619.90px;top:772px;letter-spacing:0.199px;">None</span>
<span class="t" style="left:268.55px;top:793px;letter-spacing:-0.290px;">Level:</span>
<span class="t" style="left:375.60px;top:793px;letter-spacing:0.303px;">Information</span>
<span class="t" style="left:533.75px;top:793px;letter-spacing:-0.183px;">Keywords:</span>
<span class="t" style="left:619.90px;top:793px;letter-spacing:-0.295px;">Classic,Audit Success</span>
<span class="t" style="left:268.55px;top:814px;letter-spacing:-0.480px;">User:</span>
<span class="t" style="left:375.60px;top:814px;letter-spacing:0.884px;">N/A</span>
<span class="t" style="left:533.75px;top:814px;letter-spacing:0.179px;">Computer:</span>
<span class="t" style="left:619.90px;top:814px;letter-spacing:-0.973px;">DESKTOP-KIK75P3</span>
<span class="t" style="left:268.55px;top:835px;letter-spacing:-0.058px;">OpCode:</span>
<span class="t" style="left:375.60px;top:835px;letter-spacing:0.444px;">Info</span>
<span class="t" style="left:268.55px;top:856px;letter-spacing:0.251px;">More Information:</span>
<span class="t" style="left:378.32px;top:856px;letter-spacing:-0.068px;color:#0000ff;text-decoration:underline;">Event Log Online Help</span>
<div style="left:260px;top:897px;width:486px;height:1px;background:#fff;"></div>
<div style="left:260px;top:898px;width:486px;height:16px;background:#f0f0f0;"></div>
<div style="left:277px;top:898px;width:405px;height:15px;background:#cdcdcd;"></div>
<svg class="ic" style="left:265px;top:901px" width="7" height="9" viewBox="0 0 7 9"><path d="M5.3 1.4L1.7 4.5L5.3 7.6" stroke="#505050" stroke-width="1.9" fill="none"/></svg>
<svg class="ic" style="left:735px;top:901px" width="7" height="9" viewBox="0 0 7 9"><path d="M1.7 1.4L5.3 4.5L1.7 7.6" stroke="#505050" stroke-width="1.9" fill="none"/></svg>
<div style="left:765px;top:82px;width:355px;height:848px;background:#fff;"></div>
<div style="left:765px;top:82px;width:1px;height:848px;background:#a0a0a0;"></div>
<div style="left:766px;top:82px;width:1px;height:847px;background:#696969;"></div>
<div style="left:765px;top:82px;width:355px;height:1px;background:#696969;"></div>
<div style="left:766px;top:83px;width:354px;height:1px;background:#696969;"></div>
<div style="left:1119px;top:84px;width:1px;height:846px;background:#e3e3e3;"></div>
<div style="left:767px;top:928px;width:353px;height:1px;background:#e3e3e3;"></div>
<div style="left:765px;top:929px;width:356px;height:1px;background:#f0f0f0;"></div>
<div style="left:767px;top:85px;width:352px;height:18px;background:#f0f0f0;"></div>
<div style="left:767px;top:103px;width:352px;height:1px;background:#a0a0a0;"></div>
<span class="t" style="left:772.30px;top:87px;letter-spacing:-0.451px;font-weight:bold;">Actions</span>
<div style="left:767px;top:105px;width:352px;height:25px;background:linear-gradient(#bed4ed,#9cb8d8);"></div>
<span class="t" style="left:773.46px;top:111px;letter-spacing:-0.260px;">SubC-PC-DT-Selected-Events-01-26-2023</span>
<svg class="ic" style="left:1103px;top:115px" width="10" height="5" viewBox="0 0 10 5"><path d="M0 5L5 0L10 5Z" fill="#000"/></svg>
<div class="ic" style="left:772px;top:134px"><svg width="16" height="18" viewBox="0 0 16 18"><defs><linearGradient id="g18" x1="0" y1="0" x2="0" y2="1"><stop offset="0" stop-color="#fdeaa8"/><stop offset="1" stop-color="#f1d27c"/></linearGradient></defs><path d="M0.5 7.4H5.6L6.6 5.5H11.5V7.5H12.2V15.5H0.5Z" fill="#ecd088" stroke="#c9a246" stroke-width="0.8"/><rect x="6.8" y="6.1" width="1.2" height="1.2" fill="#fff"/><rect x="7.8" y="6.1" width="2.4" height="1.2" rx="0.5" fill="#4a8de8"/><path d="M1.2 15.6L3.3 9.5H7.6L8.6 10.7H14.4L12.2 15.6Z" fill="url(#g18)" stroke="#c39a3c" stroke-width="0.8"/><path d="M10 2.5H14.2" stroke="#3fd83f" stroke-width="1"/></svg></div>
<span class="t" style="left:798.00px;top:135px;letter-spacing:-0.317px;">Open Saved Log...</span>
<div class="ic" style="left:772px;top:158px"><svg width="17" height="17" viewBox="0 0 17 17"><defs><linearGradient id="g20" x1="0" y1="0" x2="1" y2="0"><stop offset="0" stop-color="#b6cfe2"/><stop offset="0.5" stop-color="#7d9db8"/><stop offset="1" stop-color="#3c5a76"/></linearGradient><radialGradient id="g21" cx="0.4" cy="0.4" r="0.7"><stop offset="0" stop-color="#ffc21e"/><stop offset="1" stop-color="#ff9400"/></radialGradient></defs><path d="M1.2 2H16.0V3.2L10.1 9.728000000000002V15.200000000000001L7.3999999999999995 15.8V9.728000000000002L1.2 3.2Z" fill="url(#g20)"/><path d="M1.2 2.4H16.0" stroke="#56748f" stroke-width="0.9"/><path d="M7.86 3.5H15.2" stroke="#e8f0f6" stroke-width="0.7"/><path d="M1 2.2H7.5L9.6 3.4L8.6 5L10 6.2L8 6.8L7.6 8.6L6 8L4.6 9L1.2 3.6Z" fill="url(#g21)"/></svg></div>
<span class="t" style="left:798.00px;top:159px;letter-spacing:-0.142px;">Create Custom View...</span>
<span class="t" style="left:798.00px;top:183px;letter-spacing:0.077px;">Import Custom View...</span>
<div style="left:772px;top:202px;width:342px;height:1px;background:#e2e2e2;"></div>
<div class="ic" style="left:772px;top:207px"><svg width="16" height="16" viewBox="0 0 16 16"><defs><linearGradient id="g19" x1="0" y1="0" x2="1" y2="0"><stop offset="0" stop-color="#b6cfe2"/><stop offset="0.5" stop-color="#7d9db8"/><stop offset="1" stop-color="#3c5a76"/></linearGradient></defs><path d="M0 0.9H15.3V2.1L9.15 8.628000000000002V14.100000000000001L6.45 14.700000000000001V8.628000000000002L0 2.1Z" fill="url(#g19)"/><path d="M0 1.3H15.3" stroke="#56748f" stroke-width="0.9"/><path d="M6.885000000000001 2.4H14.5" stroke="#e8f0f6" stroke-width="0.7"/></svg></div>
<span class="t" style="left:798.00px;top:208px;letter-spacing:-0.105px;">Filter Current Log...</span>
<div class="ic" style="left:772px;top:231px"><svg width="16" height="17" viewBox="0 0 16 17"><rect x="0.6" y="0.6" width="14" height="15" rx="1.2" fill="#fff" stroke="#6c727c" stroke-width="0.95"/><path d="M1.5 2.4H14" stroke="#c8ccd2" stroke-width="0.9"/><rect x="12.2" y="1.2" width="1.4" height="1.2" fill="#5a7ab0"/><path d="M2.7 4.7H6.2V6H13.4V12.6H2.7Z" fill="#fff" stroke="#a4a6be" stroke-width="0.9"/><rect x="7" y="4.9" width="1.8" height="0.9" fill="#d8d8e4"/><rect x="9.6" y="4.9" width="1.8" height="0.9" fill="#d8d8e4"/><circle cx="4.5" cy="8.4" r="0.75" fill="#18a8f0"/><circle cx="4.5" cy="10.5" r="0.6" fill="#8a8a8a"/><path d="M6.2 8.4H11.2M6.2 10.5H11.2" stroke="#9a9aa2" stroke-width="0.9"/><rect x="6" y="13.6" width="3.2" height="1.4" fill="#18b4f4"/><rect x="10.4" y="13.6" width="2.4" height="1.4" fill="#c4c4c4"/></svg></div>
<span class="t" style="left:798.00px;top:232px;letter-spacing:-0.234px;">Properties</span>
<div class="ic" style="left:772px;top:255px"><svg width="17" height="17" viewBox="0 0 17 17"><path d="M0.8 9.6L1.6 2.2Q2 0.6 3.4 0.6H4.4Q5.8 0.6 6.2 2.2L6.9 9.6Z" fill="#cfd7d5" stroke="#3c4452" stroke-width="1"/><path d="M9.1 9.6L9.8 2.2Q10.2 0.6 11.6 0.6H12.6Q14 0.6 14.4 2.2L15.2 9.6Z" fill="#cfd7d5" stroke="#3c4452" stroke-width="1"/><rect x="6.6" y="2.6" width="2.8" height="5.6" fill="#dfe3e3" stroke="#3c4452" stroke-width="0.9"/><rect x="0.5" y="8.6" width="6.8" height="2.2" fill="#4a5462"/><rect x="8.7" y="8.6" width="6.8" height="2.2" fill="#4a5462"/><ellipse cx="3.9" cy="13.4" rx="3.1" ry="2.3" fill="#fff" stroke="#2a3240" stroke-width="0.8" stroke-dasharray="1.3 1"/><ellipse cx="12.1" cy="13.4" rx="3.1" ry="2.3" fill="#fff" stroke="#2a3240" stroke-width="0.8" stroke-dasharray="1.3 1"/><path d="M2.4 11.4H5.6L4.8 14.8H3Z" fill="#1e9bf0"/><path d="M10.6 11.4H13.8L13 14.8H11.2Z" fill="#1e9bf0"/><circle cx="4.4" cy="12.6" r="0.7" fill="#bfe4ff"/><circle cx="12.6" cy="12.6" r="0.7" fill="#bfe4ff"/></svg></div>
<span class="t" style="left:798.00px;top:256px;letter-spacing:-0.231px;">Find...</span>
<div class="ic" style="left:772px;top:279px"><svg width="16" height="16" viewBox="0 0 16 16"><defs><linearGradient id="g13" x1="0" y1="0" x2="0" y2="1"><stop offset="0" stop-color="#fafafa"/><stop offset="1" stop-color="#dcdcdc"/></linearGradient></defs><g transform="translate(0.9,0.1) scale(0.9,0.945)"><path d="M0.5 1H15.5V15.5H1.8L0.5 14.2Z" fill="#3a3a3a"/><rect x="3" y="0.7" width="10" height="8.4" fill="url(#g13)"/><rect x="3.6" y="10.6" width="8.4" height="4.9" fill="#c9c9c9"/><rect x="4.8" y="11.3" width="2.3" height="3.6" fill="#3a3a3a"/><rect x="0.9" y="1.6" width="1" height="1" fill="#eee"/><rect x="14" y="1.6" width="1" height="1" fill="#eee"/></g></svg></div>
<span class="t" style="left:798.00px;top:280px;letter-spacing:-0.327px;">Save All Events As...</span>
<div style="left:772px;top:299px;width:342px;height:1px;background:#e2e2e2;"></div>
<span class="t" style="left:798.00px;top:305px;letter-spacing:-0.363px;">View</span>
<svg class="ic" style="left:1105px;top:307px" width="5" height="10" viewBox="0 0 5 10"><path d="M0 0L5 5L0 10Z" fill="#000"/></svg>
<div style="left:772px;top:324px;width:342px;height:1px;background:#e2e2e2;"></div>
<div class="ic" style="left:772px;top:329px"><svg width="17" height="17" viewBox="0 0 17 17"><defs><linearGradient id="g22" gradientUnits="userSpaceOnUse" x1="0" y1="0" x2="16" y2="16"><stop offset="0" stop-color="#f4606a"/><stop offset="0.5" stop-color="#e81010"/><stop offset="1" stop-color="#d00000"/></linearGradient></defs><path d="M1.6 2L14.4 14.6M14.6 1.6L1.4 14.4" stroke="url(#g22)" stroke-width="3.3" stroke-linecap="butt" fill="none"/></svg></div>
<span class="t" style="left:798.00px;top:330px;letter-spacing:-0.344px;">Delete</span>
<div class="ic" style="left:772px;top:353px"><svg width="17" height="16" viewBox="0 0 17 16"><g transform="translate(0,-1.2)"><rect x="0.5" y="5.5" width="15" height="7.2" fill="#fff" stroke="#8e98c8" stroke-width="1"/><rect x="1.8" y="7" width="8.2" height="4.2" fill="#0a84ff"/><path d="M9.3 2.6Q11.6 2.6 12 4V14Q11.6 15.4 9.3 15.4M14.9 2.6Q12.4 2.6 12 4M14.9 15.4Q12.4 15.4 12 14" stroke="#808080" stroke-width="0.9" fill="none"/></g></svg></div>
<span class="t" style="left:798.00px;top:354px;letter-spacing:-0.565px;">Rename</span>
<div class="ic" style="left:772px;top:377px"><svg width="16" height="17" viewBox="0 0 16 17"><g transform="translate(-0.3,-1)"><path d="M2.5 1.5H11L14.5 5V16.5H2.5Z" fill="#fff" stroke="#a8a8a8" stroke-width="1"/><path d="M11 1.5V5H14.5" fill="#ececec" stroke="#a8a8a8" stroke-width="0.8"/><path d="M11.4 9.4A3.5 3.5 0 1 0 9.8 12.6" stroke="#34c234" stroke-width="1.8" fill="none"/><path d="M9.2 9.6H13.2L11.6 12.6Z" fill="#2aa62a"/></g></svg></div>
<span class="t" style="left:798.00px;top:378px;letter-spacing:-0.531px;">Refresh</span>
<div style="left:772px;top:397px;width:342px;height:1px;background:#e2e2e2;"></div>
<div class="ic" style="left:772px;top:402px"><svg width="15" height="16" viewBox="0 0 15 16"><defs><linearGradient id="g12" x1="0" y1="0" x2="1" y2="1"><stop offset="0" stop-color="#7a9aec"/><stop offset="1" stop-color="#3a55c0"/></linearGradient></defs><g transform="translate(1,0)"><rect x="0" y="0" width="13" height="16" fill="url(#g12)"/><rect x="0" y="0" width="2.6" height="16" fill="#1b3796"/><rect x="0.4" y="0.4" width="12.2" height="15.2" fill="none" stroke="#1f3aa0" stroke-width="0.8"/><text transform="translate(7.8,13.8) scale(0.74,1)" font-family="Liberation Sans,sans-serif" font-weight="bold" font-size="16" fill="#fff" text-anchor="middle">?</text></g></svg></div>
<span class="t" style="left:798.00px;top:403px;letter-spacing:-0.035px;">Help</span>
<svg class="ic" style="left:1105px;top:405px" width="5" height="10" viewBox="0 0 5 10"><path d="M0 0L5 5L0 10Z" fill="#000"/></svg>
<div style="left:767px;top:427px;width:352px;height:25px;background:linear-gradient(#bed4ed,#9cb8d8);"></div>
<span class="t" style="left:773.02px;top:433px;letter-spacing:-0.083px;">Event 0, SubCMultiStreamingVM</span>
<svg class="ic" style="left:1103px;top:437px" width="10" height="5" viewBox="0 0 10 5"><path d="M0 5L5 0L10 5Z" fill="#000"/></svg>
<div class="ic" style="left:772px;top:456px"><svg width="16" height="17" viewBox="0 0 16 17"><rect x="0.6" y="0.6" width="14" height="15" rx="1.2" fill="#fff" stroke="#6c727c" stroke-width="0.95"/><path d="M1.5 2.4H14" stroke="#c8ccd2" stroke-width="0.9"/><rect x="12.2" y="1.2" width="1.4" height="1.2" fill="#5a7ab0"/><path d="M2.7 4.7H6.2V6H13.4V12.6H2.7Z" fill="#fff" stroke="#a4a6be" stroke-width="0.9"/><rect x="7" y="4.9" width="1.8" height="0.9" fill="#d8d8e4"/><rect x="9.6" y="4.9" width="1.8" height="0.9" fill="#d8d8e4"/><circle cx="4.5" cy="8.4" r="0.75" fill="#18a8f0"/><circle cx="4.5" cy="10.5" r="0.6" fill="#8a8a8a"/><path d="M6.2 8.4H11.2M6.2 10.5H11.2" stroke="#9a9aa2" stroke-width="0.9"/><rect x="6" y="13.6" width="3.2" height="1.4" fill="#18b4f4"/><rect x="10.4" y="13.6" width="2.4" height="1.4" fill="#c4c4c4"/></svg></div>
<span class="t" style="left:798.00px;top:457px;letter-spacing:-0.254px;">Event Properties</span>
<div class="ic" style="left:772px;top:480px"><svg width="17" height="17" viewBox="0 0 17 17"><path d="M0.5 0.5H5L7.4 2.8V11.5H0.5Z" fill="#fff" stroke="#a8a8a8" stroke-width="0.9"/><path d="M2 4H4.4M2 6.4H5.6M2 8.6H5.6" stroke="#4a7fd0" stroke-width="0.9"/><path d="M7 4H11.6L15.6 7.6V15.8H7Z" fill="#fff" stroke="#a8a8a8" stroke-width="0.9"/><path d="M11.6 4V7.6H15.6" fill="none" stroke="#a8a8a8" stroke-width="0.8"/><path d="M8.6 8.6H10.6M8.6 11H14M8.6 13.4H14" stroke="#4a7fd0" stroke-width="0.9"/></svg></div>
<span class="t" style="left:798.00px;top:481px;letter-spacing:-0.261px;">Copy</span>
<svg class="ic" style="left:1105px;top:483px" width="5" height="10" viewBox="0 0 5 10"><path d="M0 0L5 5L0 10Z" fill="#000"/></svg>
<div class="ic" style="left:772px;top:504px"><svg width="16" height="16" viewBox="0 0 16 16"><defs><linearGradient id="g13" x1="0" y1="0" x2="0" y2="1"><stop offset="0" stop-color="#fafafa"/><stop offset="1" stop-color="#dcdcdc"/></linearGradient></defs><g transform="translate(0.9,0.1) scale(0.9,0.945)"><path d="M0.5 1H15.5V15.5H1.8L0.5 14.2Z" fill="#3a3a3a"/><rect x="3" y="0.7" width="10" height="8.4" fill="url(#g13)"/><rect x="3.6" y="10.6" width="8.4" height="4.9" fill="#c9c9c9"/><rect x="4.8" y="11.3" width="2.3" height="3.6" fill="#3a3a3a"/><rect x="0.9" y="1.6" width="1" height="1" fill="#eee"/><rect x="14" y="1.6" width="1" height="1" fill="#eee"/></g></svg></div>
<span class="t" style="left:798.00px;top:505px;letter-spacing:-0.433px;">Save Selected Events...</span>
<div style="left:772px;top:524px;width:342px;height:1px;background:#e2e2e2;"></div>
<div class="ic" style="left:772px;top:529px"><svg width="16" height="17" viewBox="0 0 16 17"><g transform="translate(-0.3,-1)"><path d="M2.5 1.5H11L14.5 5V16.5H2.5Z" fill="#fff" stroke="#a8a8a8" stroke-width="1"/><path d="M11 1.5V5H14.5" fill="#ececec" stroke="#a8a8a8" stroke-width="0.8"/><path d="M11.4 9.4A3.5 3.5 0 1 0 9.8 12.6" stroke="#34c234" stroke-width="1.8" fill="none"/><path d="M9.2 9.6H13.2L11.6 12.6Z" fill="#2aa62a"/></g></svg></div>
<span class="t" style="left:798.00px;top:530px;letter-spacing:-0.531px;">Refresh</span>
<div style="left:772px;top:549px;width:342px;height:1px;background:#e2e2e2;"></div>
<div class="ic" style="left:772px;top:554px"><svg width="15" height="16" viewBox="0 0 15 16"><defs><linearGradient id="g12" x1="0" y1="0" x2="1" y2="1"><stop offset="0" stop-color="#7a9aec"/><stop offset="1" stop-color="#3a55c0"/></linearGradient></defs><g transform="translate(1,0)"><rect x="0" y="0" width="13" height="16" fill="url(#g12)"/><rect x="0" y="0" width="2.6" height="16" fill="#1b3796"/><rect x="0.4" y="0.4" width="12.2" height="15.2" fill="none" stroke="#1f3aa0" stroke-width="0.8"/><text transform="translate(7.8,13.8) scale(0.74,1)" font-family="Liberation Sans,sans-serif" font-weight="bold" font-size="16" fill="#fff" text-anchor="middle">?</text></g></svg></div>
<span class="t" style="left:798.00px;top:555px;letter-spacing:-0.035px;">Help</span>
<svg class="ic" style="left:1105px;top:557px" width="5" height="10" viewBox="0 0 5 10"><path d="M0 0L5 5L0 10Z" fill="#000"/></svg>
<div style="left:0px;top:930px;width:1121px;height:1px;background:#d7d7d7;"></div>
<div style="left:900px;top:932px;width:1px;height:19px;background:#d7d7d7;"></div>
<div style="left:1033px;top:932px;width:1px;height:19px;background:#d7d7d7;"></div>
<div style="left:1118px;top:932px;width:1px;height:19px;background:#d7d7d7;"></div>
</div></body></html>
